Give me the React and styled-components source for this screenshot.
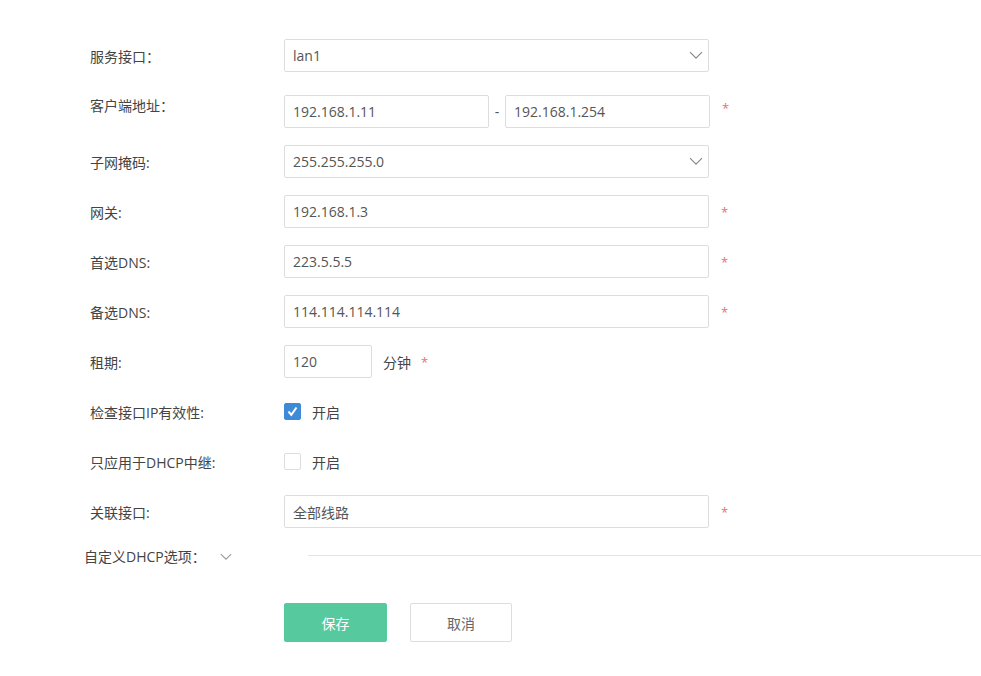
import React, { useState } from 'react'
import styled, { createGlobalStyle } from 'styled-components'

const GlobalStyle = createGlobalStyle`
  html, body {
    margin: 0;
    padding: 0;
    background: #fff;
  }
  body {
    font-family: "Open Sans", "Noto Sans CJK SC", sans-serif;
    font-size: 14px;
    color: #333;
  }
`

const Chevron = ({ size = 14, color = '#888' }) => (
  <svg width={size} height={size * 0.6} viewBox="0 0 14 8" fill="none">
    <path d="M1 1 L7 7 L13 1" stroke={color} strokeWidth="1.2" />
  </svg>
)

const Form = () => {
  const [checkIp, setCheckIp] = useState(true)
  const [relayOnly, setRelayOnly] = useState(false)

  return (
    <Page>
      <Row>
        <Label>服务接口：</Label>
        <Select>
          <span>lan1</span>
          <Chevron />
        </Select>
      </Row>
      <Row $top={23}>
        <Label $shift={-7}>客户端地址：</Label>
        <Field $w={205} defaultValue="192.168.1.11" />
        <Dash>-</Dash>
        <Field $w={205} defaultValue="192.168.1.254" />
        <Star $shift={-4}>*</Star>
      </Row>
      <Row>
        <Label>子网掩码:</Label>
        <Select>
          <span>255.255.255.0</span>
          <Chevron />
        </Select>
      </Row>
      <Row>
        <Label>网关:</Label>
        <Field defaultValue="192.168.1.3" />
        <Star>*</Star>
      </Row>
      <Row>
        <Label>首选DNS:</Label>
        <Field defaultValue="223.5.5.5" />
        <Star>*</Star>
      </Row>
      <Row>
        <Label>备选DNS:</Label>
        <Field defaultValue="114.114.114.114" />
        <Star>*</Star>
      </Row>
      <Row>
        <Label>租期:</Label>
        <Field $w={88} defaultValue="120" />
        <Unit>分钟</Unit>
        <Star $gap={10}>*</Star>
      </Row>
      <Row>
        <Label>检查接口IP有效性:</Label>
        <Check $on={checkIp} onClick={() => setCheckIp(!checkIp)}>
          {checkIp && (
            <svg width="13" height="13" viewBox="0 0 13 13">
              <path d="M2.5 6.5 L5.3 9.8 L10.5 2.5" stroke="#fff" strokeWidth="2" fill="none" />
            </svg>
          )}
        </Check>
        <CheckText>开启</CheckText>
      </Row>
      <Row>
        <Label>只应用于DHCP中继:</Label>
        <Check $on={relayOnly} onClick={() => setRelayOnly(!relayOnly)} />
        <CheckText>开启</CheckText>
      </Row>
      <Row>
        <Label>关联接口:</Label>
        <Field defaultValue="全部线路" />
        <Star>*</Star>
      </Row>

      <Section>
        <SectionTitle>
          <span>自定义DHCP选项：</span>
          <Chevron size={12} color="#999" />
        </SectionTitle>
        <Rule />
      </Section>

      <Actions>
        <Button $primary>保存</Button>
        <Button>取消</Button>
      </Actions>
    </Page>
  )
}

const Page = styled.div`
  padding: 39px 0 0 90px;
  width: 891px;
`

const Row = styled.div`
  display: flex;
  align-items: center;
  height: 33px;
  margin-top: ${(p) => (p.$top !== undefined ? p.$top : 17)}px;
  &:first-child {
    margin-top: 0;
  }
`

const Label = styled.div`
  width: 194px;
  flex: none;
  color: #444;
  position: relative;
  top: ${(p) => p.$shift || 0}px;
`

const Select = styled.div`
  box-sizing: border-box;
  width: 425px;
  height: 33px;
  border: 1px solid #ddd;
  border-radius: 2px;
  display: flex;
  align-items: center;
  justify-content: space-between;
  padding: 0 4px 0 8px;
  color: #555;
  svg {
    margin-right: 1px;
  }
`

const Field = styled.input`
  box-sizing: border-box;
  width: ${(p) => p.$w || 425}px;
  height: 33px;
  border: 1px solid #ddd;
  border-radius: 2px;
  padding: 0 8px;
  font: inherit;
  color: #555;
  outline: none;
`

const Dash = styled.span`
  width: 16px;
  text-align: center;
  color: #555;
`

const Star = styled.span`
  margin-left: ${(p) => p.$gap || 12}px;
  color: #e57373;
  font-size: 13px;
  position: relative;
  top: ${(p) => p.$shift || 0}px;
`

const Unit = styled.span`
  margin-left: 11px;
  color: #444;
`

const Check = styled.div`
  box-sizing: border-box;
  width: 17px;
  height: 17px;
  border-radius: 2px;
  border: 1px solid ${(p) => (p.$on ? '#3d8ad8' : '#ddd')};
  background: ${(p) => (p.$on ? '#3d8ad8' : '#fff')};
  display: flex;
  align-items: center;
  justify-content: center;
  cursor: pointer;
`

const CheckText = styled.span`
  margin-left: 11px;
  color: #444;
`

const Section = styled.div`
  display: flex;
  align-items: center;
  margin: 17px 0 0 -6px;
  height: 22px;
`

const SectionTitle = styled.div`
  display: flex;
  align-items: center;
  gap: 14px;
  width: 224px;
  flex: none;
  color: #444;
  svg {
    margin-top: 1px;
  }
`

const Rule = styled.div`
  flex: 1;
  height: 1px;
  background: #e4e4e4;
  margin-top: -2px;
`

const Actions = styled.div`
  display: flex;
  gap: 23px;
  margin: 36px 0 0 194px;
`

const Button = styled.button`
  box-sizing: border-box;
  width: ${(p) => (p.$primary ? 103 : 102)}px;
  height: 39px;
  border-radius: 2px;
  border: 1px solid ${(p) => (p.$primary ? '#57c99e' : '#ddd')};
  background: ${(p) => (p.$primary ? '#57c99e' : '#fff')};
  color: ${(p) => (p.$primary ? '#fff' : '#666')};
  font-family: inherit;
  font-size: 14px;
  cursor: pointer;
`

export default function App() {
  return (
    <>
      <GlobalStyle />
      <Form />
    </>
  )
}
